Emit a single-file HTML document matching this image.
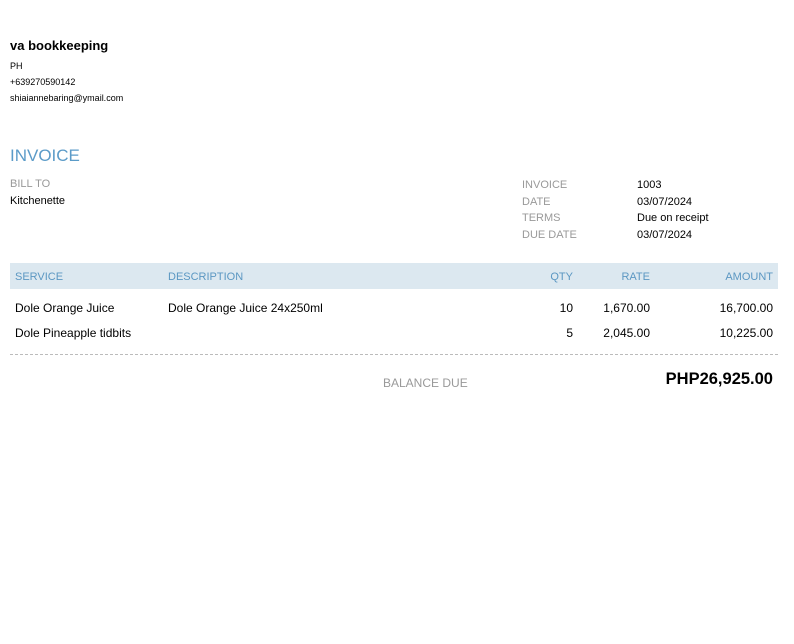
<!DOCTYPE html>
<html><head><style>
body{margin:0;width:794px;height:644px;background:#fff;font-family:"Liberation Sans",sans-serif;position:relative;color:#000}
.a{position:absolute;white-space:nowrap}
.g{color:#999}
.b{color:#5b97c2}
.r{text-align:right}
</style></head><body>
<div class="a" style="left:10px;top:38px;font-size:13px;font-weight:bold">va bookkeeping</div>
<div class="a" style="left:10px;top:61px;font-size:9px">PH</div>
<div class="a" style="left:10px;top:77px;font-size:9px">+639270590142</div>
<div class="a" style="left:10px;top:93px;font-size:9px">shiaiannebaring@ymail.com</div>
<div class="a b" style="left:10px;top:146px;font-size:17px;color:#5b9bc8">INVOICE</div>
<div class="a g" style="left:10px;top:178px;font-size:11px">BILL TO</div>
<div class="a" style="left:10px;top:195px;font-size:11px">Kitchenette</div>
<div class="a g" style="left:522px;top:177px;font-size:11px;line-height:16.7px">INVOICE<br>DATE<br>TERMS<br>DUE DATE</div>
<div class="a" style="left:637px;top:177px;font-size:11px;line-height:16.7px">1003<br>03/07/2024<br>Due on receipt<br>03/07/2024</div>
<div class="a" style="left:10px;top:263px;width:768px;height:26px;background:#dce8f0"></div>
<div class="a b" style="left:15px;top:271px;font-size:11px">SERVICE</div>
<div class="a b" style="left:168px;top:271px;font-size:11px">DESCRIPTION</div>
<div class="a b r" style="left:520px;width:53px;top:271px;font-size:11px">QTY</div>
<div class="a b r" style="left:580px;width:70px;top:271px;font-size:11px">RATE</div>
<div class="a b r" style="left:660px;width:113px;top:271px;font-size:11px">AMOUNT</div>
<div class="a" style="left:15px;top:301px;font-size:12px">Dole Orange Juice</div>
<div class="a" style="left:168px;top:301px;font-size:12px">Dole Orange Juice 24x250ml</div>
<div class="a r" style="left:520px;width:53px;top:301px;font-size:12px">10</div>
<div class="a r" style="left:580px;width:70px;top:301px;font-size:12px">1,670.00</div>
<div class="a r" style="left:660px;width:113px;top:301px;font-size:12px">16,700.00</div>
<div class="a" style="left:15px;top:326px;font-size:12px">Dole Pineapple tidbits</div>
<div class="a r" style="left:520px;width:53px;top:326px;font-size:12px">5</div>
<div class="a r" style="left:580px;width:70px;top:326px;font-size:12px">2,045.00</div>
<div class="a r" style="left:660px;width:113px;top:326px;font-size:12px">10,225.00</div>
<div class="a" style="left:10px;top:354px;width:768px;border-top:1px dashed #bbb"></div>
<div class="a g" style="left:383px;top:376px;font-size:12px">BALANCE DUE</div>
<div class="a r" style="left:560px;width:213px;top:370px;font-size:16.5px;font-weight:bold">PHP26,925.00</div>
</body></html>
